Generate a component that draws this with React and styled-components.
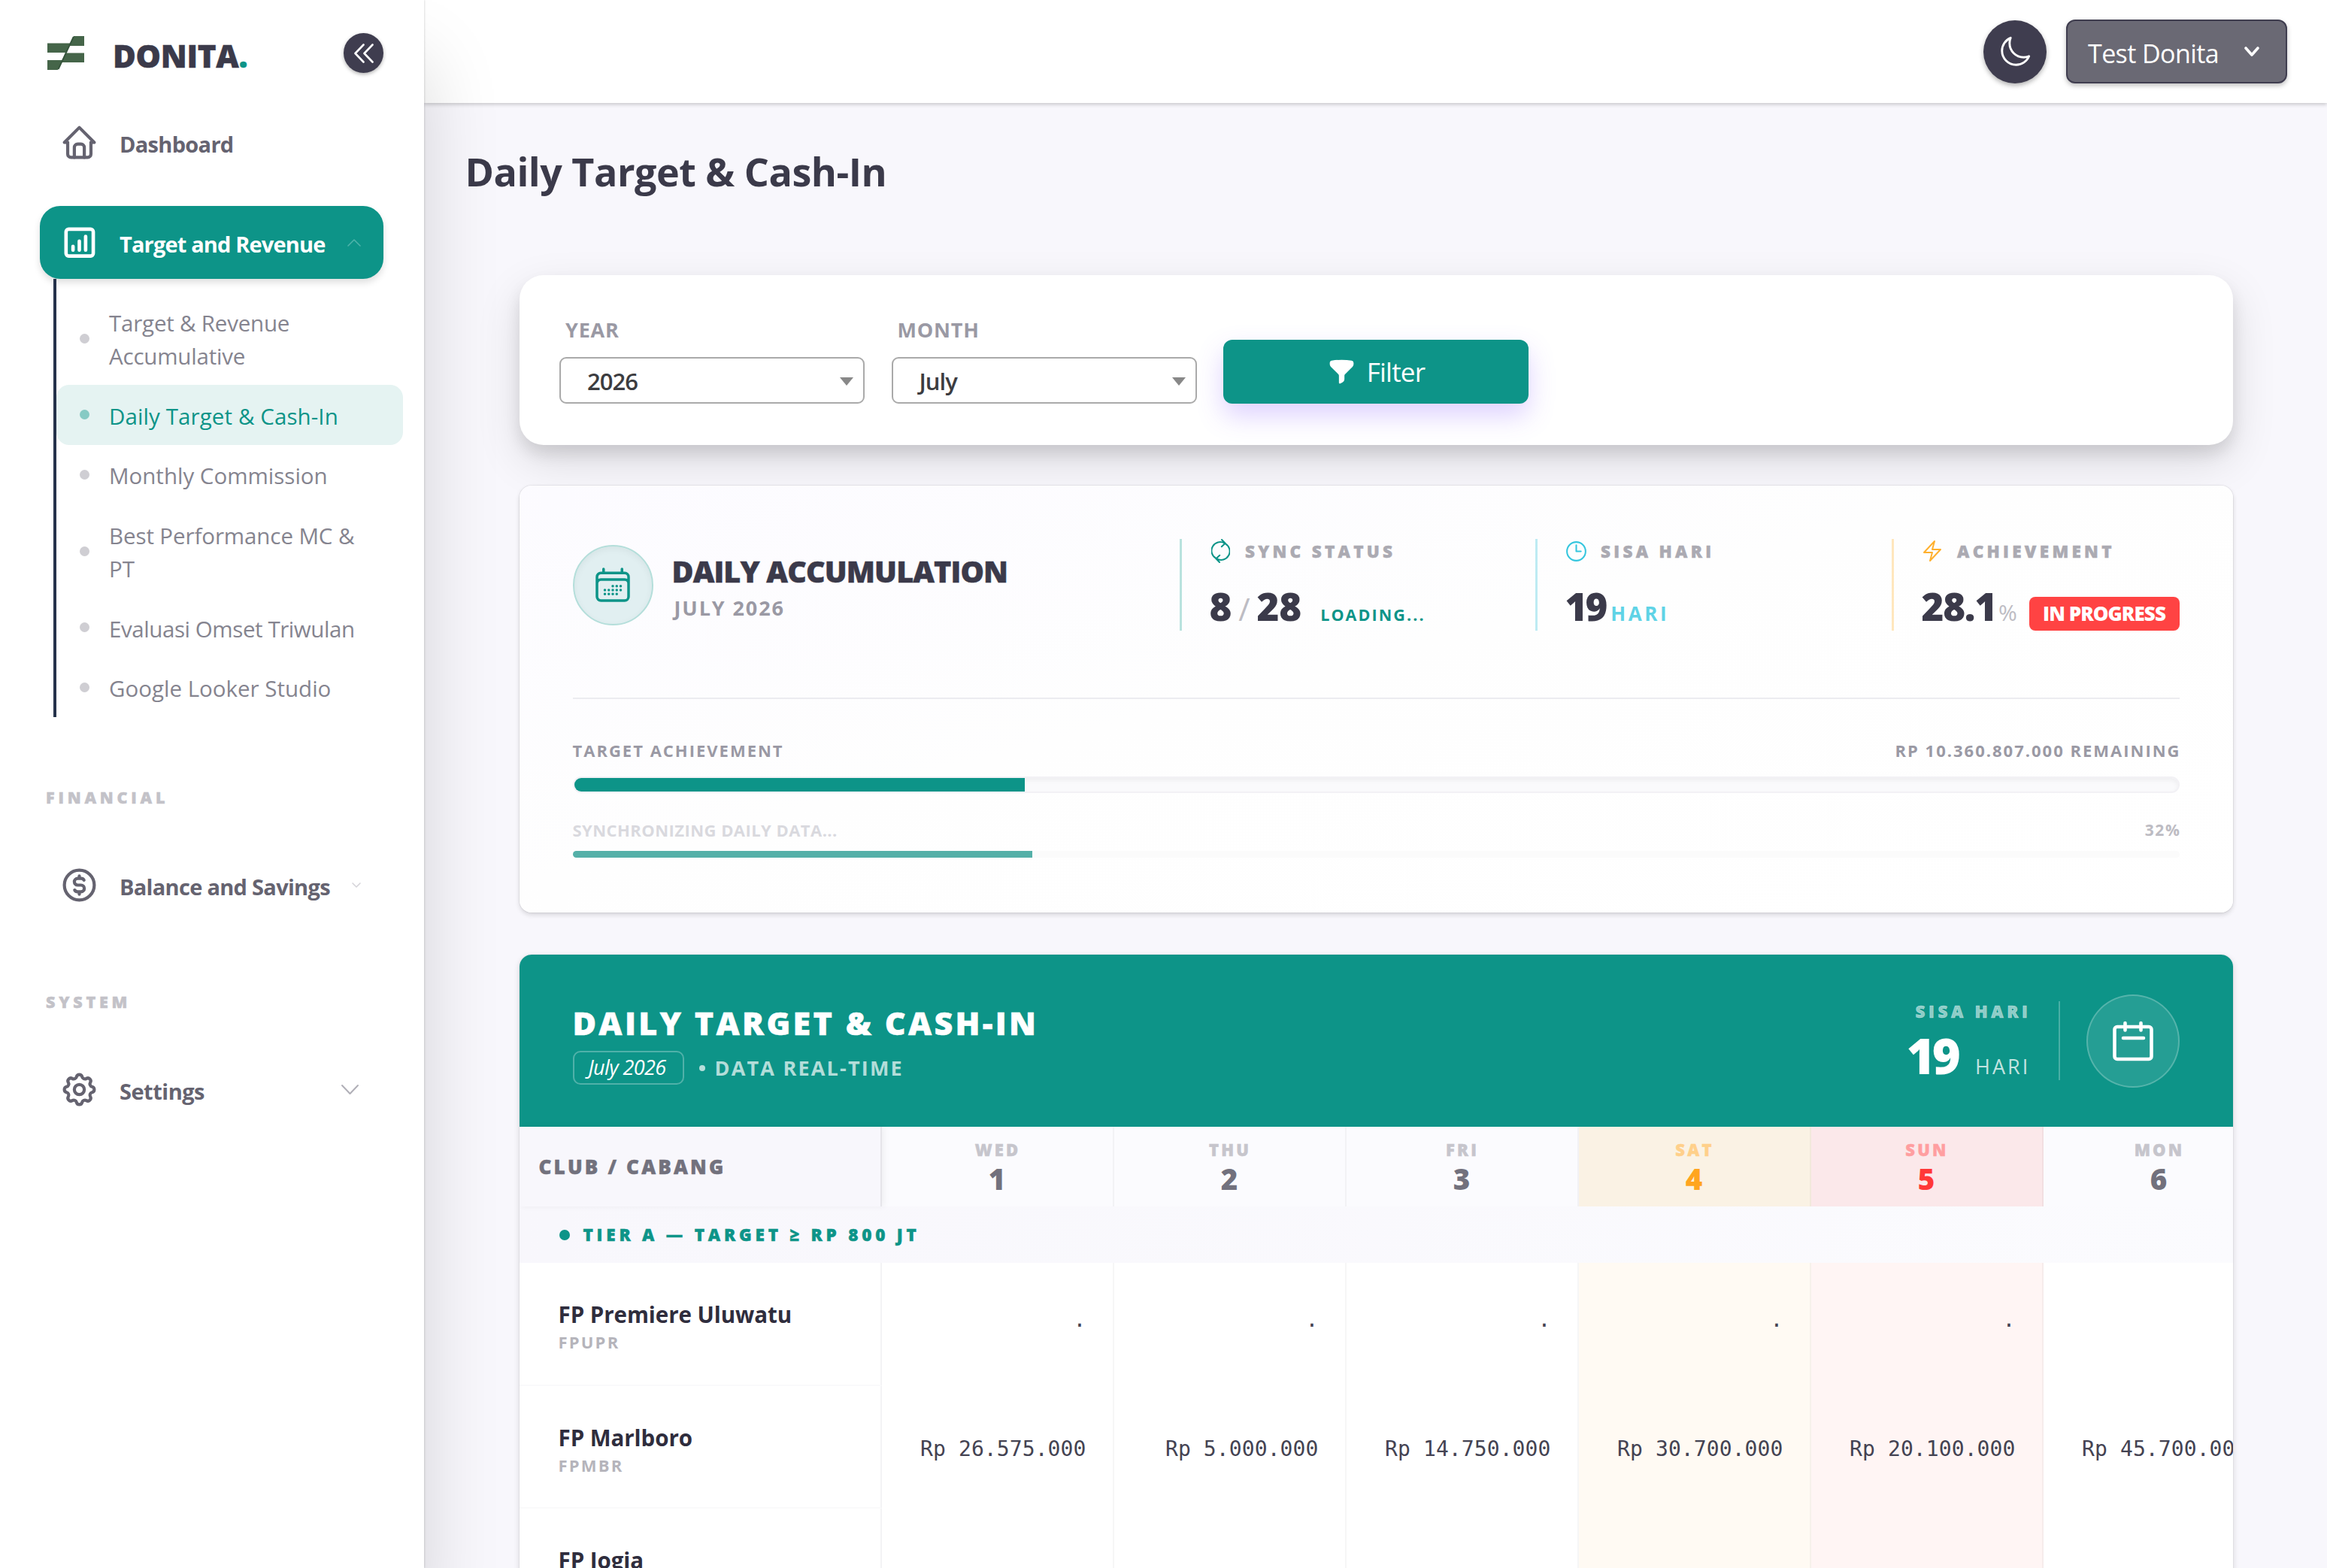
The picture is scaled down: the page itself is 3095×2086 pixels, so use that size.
import React, { useState } from 'react';
import styled, { createGlobalStyle, css } from 'styled-components';
import { HiFunnel, HiOutlineBolt, HiOutlineCalendarDays, HiOutlineClock, HiOutlineMoon } from 'react-icons/hi2';

const GlobalStyle = createGlobalStyle`
  * { box-sizing: border-box; }
  body {
    margin: 0;
    background: #f8f7fc;
    font-family: 'Open Sans', 'Noto Sans', sans-serif;
    color: #3b3a4a;
  }
`

// extra weight for the "black" captions
const heavy = css`
  font-weight: 800;
  -webkit-text-stroke: 0.5px currentColor;
`

/* ---------- layout ---------- */

const Layout = styled.div`
  display: flex;
  height: 2086px;
  overflow: hidden;
`

const Sidebar = styled.aside`
  position: relative;
  z-index: 2;
  flex: none;
  width: 564px;
  background: #fff;
  box-shadow: 1px 0 2px rgba(0, 0, 0, 0.12), 0 80px 95px rgba(0, 0, 0, 0.15);
`

const Main = styled.main`
  flex: 1;
  min-width: 0;
  display: flex;
  flex-direction: column;
`

const Topbar = styled.header`
  position: relative;
  z-index: 1;
  flex: none;
  display: flex;
  align-items: center;
  justify-content: flex-end;
  gap: 26px;
  height: 137px;
  padding: 0 53px;
  background: #fff;
  box-shadow: 0 2px 5px rgba(0, 0, 0, 0.2);
`

const Content = styled.div`
  padding: 56px 125.5px 0 126.5px;
`

/* ---------- sidebar ---------- */

const Brand = styled.div`
  display: flex;
  align-items: center;
  height: 141px;
  padding: 0 54px 0 63px;
`

const BrandName = styled.div`
  flex: 1;
  padding: 6px 0 0 38px;
  font-size: 42px;
  ${heavy}
  line-height: 60px;
  letter-spacing: -0.3px;
  color: #3b3a4a;

  span { color: #0d9488; }
`

const Collapse = styled.button`
  display: flex;
  align-items: center;
  justify-content: center;
  width: 53px;
  height: 53px;
  padding: 0;
  border: none;
  border-radius: 50%;
  background: #3f3d4f;
  box-shadow: 0 2px 5px rgba(0, 0, 0, 0.3);
`

const MenuItem = styled.a`
  display: flex;
  align-items: center;
  width: 457px;
  height: 97px;
  margin-left: 53px;
  margin-top: ${props => props.$top || 0}px;
  padding: 0 ${props => props.$right || 29}px 0 26px;
  border-radius: 27px;
  color: #656370;
  ${props => props.$active && css`
    background: #0d9488;
    color: #fff;
    box-shadow: 0 5px 10px rgba(0, 0, 0, 0.13);
  `}
`

const MenuLabel = styled.span`
  flex: 1;
  padding-top: 4px;
  margin-left: 27px;
  font-size: 29px;
  font-weight: 700;
  line-height: 44px;
  letter-spacing: ${props => props.$ls || -0.7}px;
  white-space: nowrap;
`

const MenuTitle = styled.div`
  margin-top: 92px;
  padding-left: 61px;
  font-size: 21.5px;
  ${heavy}
  line-height: 30px;
  letter-spacing: 4.8px;
  color: #c3c2c8;
`

const SubMenu = styled.div`
  width: 465px;
  margin-left: 71px;
  padding-top: 17px;
  border-left: 4px solid #25324b;
`

const SubItem = styled.a`
  display: flex;
  align-items: center;
  min-height: 79.5px;
  height: ${props => props.$tall ? 124 : 79.5}px;
  padding: 0 40px 0 31px;
  border-radius: 17px;
  font-size: 29.5px;
  line-height: 44px;
  color: ${props => props.$active ? '#0d9488' : '#85848f'};
  background: ${props => props.$active ? '#e5f3f2' : 'transparent'};
`

const SubDot = styled.i`
  flex: none;
  width: 13px;
  height: 13px;
  margin-right: 26px;
  border-radius: 50%;
  background: ${props => props.$active ? '#86cac4' : '#cfced3'};
`

const SubText = styled.span`
  padding-top: 4px;
  letter-spacing: ${props => props.$ls || 0}px;
`

/* ---------- topbar ---------- */

const ThemeButton = styled.button`
  display: flex;
  align-items: center;
  justify-content: center;
  width: 84px;
  height: 84px;
  padding: 0;
  border: none;
  border-radius: 50%;
  color: #fff;
  background: #3f3d4f;
  box-shadow: 0 3px 6px rgba(0, 0, 0, 0.3);
`

const UserButton = styled.button`
  display: flex;
  align-items: center;
  justify-content: space-between;
  width: 294px;
  height: 85px;
  padding: 0 35px 0 27px;
  border: 2px solid #3f3d4f;
  border-radius: 12px;
  font: 400 34px/48px 'Open Sans', sans-serif;
  letter-spacing: -0.6px;
  color: #fff;
  background: #6a6974;
  box-shadow: 0 3px 6px rgba(0, 0, 0, 0.25);

  span { padding-top: 5px; }
`

/* ---------- filter ---------- */

const PageTitle = styled.h1`
  margin: 0 0 103px -72px;
  font-size: 52px;
  font-weight: 700;
  line-height: 70px;
  letter-spacing: -0.48px;
  color: #3b3a4a;
`

const FilterCard = styled.section`
  display: flex;
  align-items: flex-end;
  gap: 35.5px;
  height: 226px;
  padding: 0 53.5px 55px;
  border-radius: 32px;
  background: #fff;
  box-shadow: 0 12px 20px rgba(0, 0, 0, 0.1), 0 22px 60px rgba(0, 0, 0, 0.12);
`

const Field = styled.label`
  width: 406px;
`

const FieldLabel = styled.div`
  margin-bottom: 18px;
  padding-left: 8px;
  font-size: 27px;
  font-weight: 700;
  line-height: 37px;
  letter-spacing: 0.8px;
  color: #9a99a4;
`

const SelectBox = styled.div`
  display: flex;
  align-items: center;
  justify-content: space-between;
  height: 62px;
  padding: 2px 13px 0 35px;
  border: 2px solid #aaa;
  border-radius: 9px;
  font-size: 31px;
  font-weight: 600;
  line-height: 44px;
  letter-spacing: -1px;
  color: #3c3c40;

  i {
    border: 9px solid transparent;
    border-top: 11px solid #888;
    border-bottom: none;
  }
`

const FilterButton = styled.button`
  display: flex;
  align-items: center;
  justify-content: center;
  gap: 14px;
  width: 406px;
  height: 85px;
  padding: 0;
  border: none;
  border-radius: 12px;
  font: 400 35px/48px 'Open Sans', sans-serif;
  letter-spacing: -0.8px;
  color: #fff;
  background: #0d9488;
  box-shadow: 0 16px 34px rgba(124, 77, 255, 0.25);
`

/* ---------- accumulation card ---------- */

const SummaryCard = styled.section`
  height: 568px;
  margin-top: 54px;
  padding: 71px;
  border-radius: 16px;
  background: linear-gradient(165deg, #fcfbff 0%, #fefefe 45%, #fff 100%);
  box-shadow: 0 0 0 1px rgba(0, 0, 0, 0.05), 0 3px 6px rgba(0, 0, 0, 0.14);
`

const SummaryHead = styled.div`
  display: flex;
  align-items: center;
  height: 122px;
`

const RoundIcon = styled.div`
  display: flex;
  align-items: center;
  justify-content: center;
  width: 107px;
  height: 107px;
  border: 2px solid #b4deda;
  border-radius: 50%;
  color: #0d9488;
  background: #e1eff1;
  box-shadow: inset 0 3px 10px rgba(0, 0, 0, 0.05);
`

const SummaryTitle = styled.h2`
  margin: 12px 0 0;
  padding-left: 25px;
  font-size: 39.5px;
  ${heavy}
  line-height: 50px;
  letter-spacing: -0.85px;
  color: #3b3a4a;

  small {
    display: block;
    padding-left: 3px;
    font-size: 27px;
    font-weight: 700;
    line-height: 48px;
    letter-spacing: 1.9px;
    -webkit-text-stroke: 0;
    color: #9a99a4;
  }
`

const Stats = styled.div`
  display: grid;
  grid-template-columns: 473px 474px 383px;
  margin-left: auto;
`

const Stat = styled.div`
  height: 122px;
  padding-left: 37px;
  border-left: 3px solid ${props => props.$color};
`

const StatLabel = styled.div`
  display: flex;
  align-items: center;
  height: 32px;
  font-size: 22.5px;
  ${heavy}
  letter-spacing: 4.3px;
  white-space: nowrap;
  color: #abaab2;
`

const StatIcon = styled.span`
  display: flex;
  align-items: center;
  justify-content: center;
  width: 34px;
  margin: 0 16px 0 -2.5px;
  color: ${props => props.$color};
`

const StatValue = styled.div`
  display: flex;
  align-items: baseline;
  margin-top: 24px;
  font-size: 51px;
  font-weight: 800;
  line-height: 66px;
  letter-spacing: ${props => props.$ls || 0}px;
  color: #3b3a4a;
`

const Slash = styled.span`
  width: 33px;
  text-align: center;
  font-size: 42px;
  font-weight: 400;
  color: #bdbcc3;
`

const Loading = styled.span`
  margin-left: 25px;
  font-size: 21.5px;
  font-weight: 700;
  letter-spacing: 2.1px;
  color: #0d9488;
`

const Hari = styled.span`
  margin-left: 7px;
  font-size: 26px;
  font-weight: 700;
  letter-spacing: 3.6px;
  color: #5fd3e6;
`

const Percent = styled.span`
  margin-left: 3px;
  font-size: 30px;
  font-weight: 400;
  letter-spacing: 0;
  color: #bdbcc3;
`

const Badge = styled.span`
  width: 200px;
  height: 45px;
  margin-left: auto;
  border-radius: 8px;
  text-align: center;
  font-size: 26px;
  line-height: 45px;
  letter-spacing: -0.95px;
  color: #fff;
  background: #ff4343;
`

const Divider = styled.hr`
  height: 2px;
  margin: 89px 0 53px;
  border: none;
  background: #ececf0;
`

const BarCaption = styled.div`
  display: flex;
  justify-content: space-between;
  margin-top: ${props => props.$top || 0}px;
  margin-right: -2px;
  font-size: 22px;
  font-weight: 700;
  line-height: 30px;
  letter-spacing: ${props => props.$ls}px;
  color: ${props => props.$color};
`

const BarPercent = styled.span`
  font-size: 21px;
  letter-spacing: 1.6px;
  color: #bdbcc3;
`

const Track = styled.div`
  height: 22px;
  margin-top: 20px;
  border: 2px solid #f2f1f5;
  border-radius: 11px;
  background: #fafafc;
  box-shadow: inset 0 3px 6px rgba(0, 0, 0, 0.05);
  overflow: hidden;

  div {
    height: 18px;
    background: #0d9488;
  }
`

const ThinTrack = styled.div`
  height: 9px;
  margin-top: 13px;
  border-radius: 5px;
  background: #fbfbfb;
  overflow: hidden;

  div {
    height: 9px;
    background: #54b0a8;
  }
`

/* ---------- table card ---------- */

const TableCard = styled.section`
  margin-top: 56px;
  border-radius: 16px;
  background: #fff;
  box-shadow: 0 0 0 1px rgba(0, 0, 0, 0.03), 0 3px 8px rgba(0, 0, 0, 0.14);
  overflow: hidden;
`

const TableHead = styled.div`
  display: flex;
  align-items: center;
  height: 229px;
  padding: 0 71px;
  color: #fff;
  background: #0d9488;
`

const TableTitle = styled.h2`
  margin: 0;
  font-size: 43px;
  ${heavy}
  line-height: 60px;
  letter-spacing: 3.3px;
`

const HeadLeft = styled.div`
  flex: 1;
  padding-top: 5px;
`

const SubLine = styled.div`
  display: flex;
  align-items: center;
  margin-top: 7px;
  font-size: 27px;
  font-weight: 700;
  line-height: 40px;
  letter-spacing: 2.2px;
  color: rgba(255, 255, 255, 0.7);

  i {
    width: 8px;
    height: 8px;
    margin: 0 13px 0 20px;
    border-radius: 50%;
    background: rgba(255, 255, 255, 0.7);
  }
`

const Period = styled.em`
  width: 148px;
  height: 45px;
  padding-right: 3px;
  border: 2px solid rgba(255, 255, 255, 0.28);
  border-radius: 10px;
  text-align: center;
  font-weight: 400;
  letter-spacing: -0.6px;
  color: #fff;
`

const DaysLeft = styled.div`
  padding: 5px 40px 0 0;
`

const DaysLabel = styled.div`
  margin-right: -4px;
  text-align: right;
  font-size: 22.5px;
  ${heavy}
  line-height: 30px;
  letter-spacing: 4.6px;
  color: rgba(255, 255, 255, 0.55);
`

const DaysValue = styled.div`
  display: flex;
  align-items: baseline;
  justify-content: flex-end;
  height: 80px;
  margin: 3px -3px 0 0;
  font-size: 65px;
  font-weight: 800;
  line-height: 80px;
  letter-spacing: -4px;

  span {
    margin-left: 23px;
    font-size: 27px;
    font-weight: 400;
    line-height: 40px;
    letter-spacing: 3.1px;
    color: rgba(255, 255, 255, 0.75);
  }
`

const HeadRule = styled.div`
  width: 2px;
  height: 105px;
  margin-right: 35px;
  background: rgba(255, 255, 255, 0.25);
`

const HeadIcon = styled.div`
  display: flex;
  align-items: center;
  justify-content: center;
  width: 124px;
  height: 124px;
  border: 2px solid rgba(255, 255, 255, 0.22);
  border-radius: 50%;
  background: rgba(255, 255, 255, 0.1);
`

const tone = {
    sat: { head: '#faf2e4', body: '#fffaf3', day: '#ffd08a', num: '#ffa51f' },
    sun: { head: '#fbe8ea', body: '#fff5f4', day: '#ff9ea0', num: '#ff3838' },
    plain: { head: '#fbfbfe', body: '#fff', day: '#c6c5cc', num: '#72717d' }
}

const Row = styled.div`
  display: flex;
  width: max-content;
  height: ${props => props.$height}px;
`

const ClubHeadCell = styled.div`
  position: relative;
  width: 482px;
  padding-left: 26px;
  border-right: 2px solid #e6e5ea;
  font-size: 26px;
  ${heavy}
  line-height: 107px;
  letter-spacing: 3.2px;
  color: #72717d;
  background: #f8f7fc;
  box-shadow: 3px 0 8px rgba(0, 0, 0, 0.05);
`

const DayHeadCell = styled.div`
  width: 309px;
  padding-top: 16px;
  border-right: 2px solid rgba(0, 0, 0, 0.035);
  text-align: center;
  background: ${props => tone[props.$tone].head};

  small {
    display: block;
    padding-left: 2px;
    font-size: 22px;
    ${heavy}
    line-height: 28px;
    letter-spacing: 3.2px;
    color: ${props => tone[props.$tone].day};
  }

  b {
    display: block;
    font-size: 38.5px;
    font-weight: 800;
    line-height: 50px;
    color: ${props => tone[props.$tone].num};
  }
`

const TierRow = styled.div`
  display: flex;
  align-items: center;
  height: 75px;
  padding-left: 53px;
  font-size: 22.5px;
  ${heavy}
  letter-spacing: 4.8px;
  color: #0d9488;
  background: linear-gradient(90deg, #f8f7fc, #fbfbfe);

  i {
    width: 14px;
    height: 14px;
    margin-right: 18px;
    border-radius: 50%;
    background: #0d9488;
  }
`

const ClubCell = styled.div`
  width: 482px;
  padding: 50px 0 0 52px;
  border-right: 2px solid #f3f3f5;
  border-bottom: 2px solid #fafafb;
  font-size: 29.5px;
  font-weight: 700;
  line-height: 37px;
  letter-spacing: -0.05px;
  color: #2f2d3d;

  small {
    display: block;
    font-size: 22px;
    line-height: 36px;
    letter-spacing: 2.2px;
    color: #b5b4bb;
  }
`

const ValueCell = styled.div`
  width: 309px;
  padding: 2px 35px 0 0;
  border-right: 2px solid rgba(0, 0, 0, 0.035);
  text-align: right;
  font-family: 'DejaVu Sans Mono', monospace;
  font-size: 28px;
  line-height: 163px;
  letter-spacing: 0.1px;
  white-space: nowrap;
  color: #444352;
  background: ${props => tone[props.$tone].body};
`

/* ---------- icons ---------- */

const Svg = ({ size = 53, stroke = 2, children }) => (
    <svg width={size} height={size} viewBox="0 0 24 24" fill="none" stroke="currentColor"
        strokeWidth={stroke} strokeLinecap="round" strokeLinejoin="round">
        {children}
    </svg>
)

const HomeIcon = () => (
    <Svg stroke={1.9}>
        <path d="M5 12H3l9-9 9 9h-2" />
        <path d="M5 12v7a2 2 0 0 0 2 2h10a2 2 0 0 0 2-2v-7" />
        <path d="M9 21v-6a2 2 0 0 1 2-2h2a2 2 0 0 1 2 2v6" />
    </Svg>
)

const ChartIcon = () => (
    <Svg stroke={2.1}>
        <rect x="4" y="4" width="16.4" height="16.2" rx="1.6" />
        <path d="M8.2 16.6v-2.2M12 16.6v-5.4M15.8 16.6V8.4" />
    </Svg>
)

const CoinIcon = () => (
    <Svg stroke={1.9}>
        <circle cx="12" cy="12" r="9" />
        <path d="M14.8 9A2 2 0 0 0 13 8h-2a2 2 0 1 0 0 4h2a2 2 0 1 1 0 4h-2a2 2 0 0 1-1.8-1M12 6.5V8m0 8v1.5" />
    </Svg>
)

const GearIcon = () => (
    <Svg stroke={1.9}>
        <path d="M10.325 4.317c.426-1.756 2.924-1.756 3.35 0a1.724 1.724 0 0 0 2.573 1.066c1.543-.94 3.31.826 2.37 2.37a1.724 1.724 0 0 0 1.065 2.572c1.756.426 1.756 2.924 0 3.35a1.724 1.724 0 0 0-1.066 2.573c.94 1.543-.826 3.31-2.37 2.37a1.724 1.724 0 0 0-2.572 1.065c-.426 1.756-2.924 1.756-3.35 0a1.724 1.724 0 0 0-2.573-1.066c-1.543.94-3.31-.826-2.37-2.37a1.724 1.724 0 0 0-1.065-2.572c-1.756-.426-1.756-2.924 0-3.35a1.724 1.724 0 0 0 1.066-2.573c-.94-1.543.826-3.31 2.37-2.37 1 .608 2.296.07 2.572-1.065z" />
        <circle cx="12" cy="12" r="3" />
    </Svg>
)

const SyncIcon = () => (
    <svg width="25" height="32" viewBox="0 0 25 32" fill="none" stroke="currentColor"
        strokeWidth="2" strokeLinecap="round" strokeLinejoin="round">
        <path d="M6.2 25.6A11.5 11.5 0 0 1 17.6 5.6M14 1l4.6 4.8-4.8 4.4" />
        <path d="M18.8 6.4A11.5 11.5 0 0 1 7.4 26.4M11 31l-4.6-4.8 4.8-4.4" />
    </svg>
)

const CalendarIcon = () => (
    <svg width="54" height="54" viewBox="0 0 54 54" fill="none" stroke="currentColor"
        strokeWidth="4.6" strokeLinecap="round" strokeLinejoin="round">
        <rect x="2.5" y="8" width="49" height="43" rx="3.5" />
        <path d="M16.5 3v9.5M37.5 3v9.5M14 23h27" />
    </svg>
)

const Chevron = ({ width, height, stroke = 2, color = 'currentColor', up }) => (
    <svg width={width} height={height} viewBox={`0 0 ${width} ${height}`} fill="none" stroke={color}
        strokeWidth={stroke} strokeLinecap="round" strokeLinejoin="round">
        {up
            ? <path d={`M2 ${height - 2}L${width / 2} 2L${width - 2} ${height - 2}`} />
            : <path d={`M2 2L${width / 2} ${height - 2}L${width - 2} 2`} />}
    </svg>
)

const Logo = () => (
    <svg width="49" height="45" viewBox="0 0 49 45" fill="#456549">
        <path d="M35 0h14v13H29z" />
        <path d="M0 9.5h31L25 22H0z" />
        <path d="M24 22.5h25V35H18.5z" />
        <path d="M0 32h20l-6 13H0z" />
        <path d="M34.8 1L14.6 44" stroke="#34533a" strokeWidth="1.8" />
    </svg>
)

/* ---------- data ---------- */

const subItems = [
    { label: 'Target & Revenue Accumulative', ls: -0.2, tall: true },
    { label: 'Daily Target & Cash-In', ls: 0.1 },
    { label: 'Monthly Commission' },
    { label: 'Best Performance MC & PT', ls: -0.1, tall: true },
    { label: 'Evaluasi Omset Triwulan', ls: -0.42 },
    { label: 'Google Looker Studio' }
]

const days = [
    { day: 'WED', num: 1, tone: 'plain' },
    { day: 'THU', num: 2, tone: 'plain' },
    { day: 'FRI', num: 3, tone: 'plain' },
    { day: 'SAT', num: 4, tone: 'sat' },
    { day: 'SUN', num: 5, tone: 'sun' },
    { day: 'MON', num: 6, tone: 'plain' }
]

const clubs = [
    { name: 'FP Premiere Uluwatu', code: 'FPUPR', values: ['·', '·', '·', '·', '·', ''] },
    {
        name: 'FP Marlboro',
        code: 'FPMBR',
        values: ['Rp 26.575.000', 'Rp 5.000.000', 'Rp 14.750.000', 'Rp 30.700.000', 'Rp 20.100.000', 'Rp 45.700.000']
    },
    { name: 'FP Jogja', code: '', values: ['', '', '', '', '', ''] }
]

function App() {
    const [active, setActive] = useState('Daily Target & Cash-In')

    return (
        <Layout>
            <GlobalStyle />
            <Sidebar>
                <Brand>
                    <Logo />
                    <BrandName>DONITA<span>.</span></BrandName>
                    <Collapse>
                        <svg width="26" height="26" viewBox="0 0 26 26" fill="none" stroke="#fff"
                            strokeWidth="2.6" strokeLinecap="round" strokeLinejoin="round">
                            <path d="M12.5 1.5L1.5 13l11 11.5M24.5 1.5L13.5 13l11 11.5" />
                        </svg>
                    </Collapse>
                </Brand>
                <MenuItem>
                    <HomeIcon />
                    <MenuLabel>Dashboard</MenuLabel>
                </MenuItem>
                <MenuItem $active $top={36}>
                    <ChartIcon />
                    <MenuLabel $ls={-0.85}>Target and Revenue</MenuLabel>
                    <Chevron up width={20} height={12} stroke={1.6} color="#4fb3aa" />
                </MenuItem>
                <SubMenu>
                    {subItems.map((item) => {
                        const on = item.label === active
                        return (
                            <SubItem key={item.label} $active={on} $tall={item.tall} onClick={() => setActive(item.label)}>
                                <SubDot $active={on} />
                                <SubText $ls={item.ls}>{item.label}</SubText>
                            </SubItem>
                        )
                    })}
                </SubMenu>
                <MenuTitle>FINANCIAL</MenuTitle>
                <MenuItem $top={53}>
                    <CoinIcon />
                    <MenuLabel>Balance and Savings</MenuLabel>
                    <Chevron width={14} height={9} stroke={1.6} color="#d5d4d9" />
                </MenuItem>
                <MenuTitle>SYSTEM</MenuTitle>
                <MenuItem $top={53} $right={32}>
                    <GearIcon />
                    <MenuLabel $ls={-0.5}>Settings</MenuLabel>
                    <Chevron width={25} height={15} color="#b0afb7" />
                </MenuItem>
            </Sidebar>

            <Main>
                <Topbar>
                    <ThemeButton>
                        <HiOutlineMoon size={46} />
                    </ThemeButton>
                    <UserButton>
                        <span>Test Donita</span>
                        <Chevron width={20} height={13} stroke={3.6} />
                    </UserButton>
                </Topbar>

                <Content>
                    <PageTitle>Daily Target &amp; Cash-In</PageTitle>

                    <FilterCard>
                        <Field>
                            <FieldLabel>YEAR</FieldLabel>
                            <SelectBox>2026<i /></SelectBox>
                        </Field>
                        <Field>
                            <FieldLabel>MONTH</FieldLabel>
                            <SelectBox>July<i /></SelectBox>
                        </Field>
                        <FilterButton>
                            <HiFunnel size={39} />
                            Filter
                        </FilterButton>
                    </FilterCard>

                    <SummaryCard>
                        <SummaryHead>
                            <RoundIcon><HiOutlineCalendarDays size={56} /></RoundIcon>
                            <SummaryTitle>
                                DAILY ACCUMULATION
                                <small>JULY 2026</small>
                            </SummaryTitle>
                            <Stats>
                                <Stat $color="#b9e2de">
                                    <StatLabel>
                                        <StatIcon $color="#0d9488"><SyncIcon /></StatIcon>
                                        SYNC STATUS
                                    </StatLabel>
                                    <StatValue>
                                        8<Slash>/</Slash>28
                                        <Loading>LOADING...</Loading>
                                    </StatValue>
                                </Stat>
                                <Stat $color="#bdebf3">
                                    <StatLabel>
                                        <StatIcon $color="#35c6de"><HiOutlineClock size={33} /></StatIcon>
                                        SISA HARI
                                    </StatLabel>
                                    <StatValue $ls={-3}>
                                        19<Hari>HARI</Hari>
                                    </StatValue>
                                </Stat>
                                <Stat $color="#ffe7bd">
                                    <StatLabel>
                                        <StatIcon $color="#ffb02e"><HiOutlineBolt size={32} /></StatIcon>
                                        ACHIEVEMENT
                                    </StatLabel>
                                    <StatValue $ls={-1.2}>
                                        28.1<Percent>%</Percent>
                                        <Badge>IN PROGRESS</Badge>
                                    </StatValue>
                                </Stat>
                            </Stats>
                        </SummaryHead>
                        <Divider />
                        <BarCaption $ls={2} $color="#9a99a4">
                            <span>TARGET ACHIEVEMENT</span>
                            <span>RP 10.360.807.000 REMAINING</span>
                        </BarCaption>
                        <Track><div style={{ width: '28.1%' }} /></Track>
                        <BarCaption $top={34} $ls={0.45} $color="#d9d9de">
                            <span>SYNCHRONIZING DAILY DATA...</span>
                            <BarPercent>32%</BarPercent>
                        </BarCaption>
                        <ThinTrack><div style={{ width: '28.6%' }} /></ThinTrack>
                    </SummaryCard>

                    <TableCard>
                        <TableHead>
                            <HeadLeft>
                                <TableTitle>DAILY TARGET &amp; CASH-IN</TableTitle>
                                <SubLine>
                                    <Period>July 2026</Period>
                                    <i />
                                    DATA REAL-TIME
                                </SubLine>
                            </HeadLeft>
                            <DaysLeft>
                                <DaysLabel>SISA HARI</DaysLabel>
                                <DaysValue>19<span>HARI</span></DaysValue>
                            </DaysLeft>
                            <HeadRule />
                            <HeadIcon><CalendarIcon /></HeadIcon>
                        </TableHead>
                        <Row $height={106}>
                            <ClubHeadCell>CLUB / CABANG</ClubHeadCell>
                            {days.map((d) => (
                                <DayHeadCell key={d.num} $tone={d.tone}>
                                    <small>{d.day}</small>
                                    <b>{d.num}</b>
                                </DayHeadCell>
                            ))}
                        </Row>
                        <TierRow><i />TIER A — TARGET ≥ RP 800 JT</TierRow>
                        {clubs.map((club) => (
                            <Row key={club.name} $height={163.5}>
                                <ClubCell>
                                    {club.name}
                                    <small>{club.code}</small>
                                </ClubCell>
                                {club.values.map((value, key) => (
                                    <ValueCell key={key} $tone={days[key].tone}>{value}</ValueCell>
                                ))}
                            </Row>
                        ))}
                    </TableCard>
                </Content>
            </Main>
        </Layout>
    )
}

export default App;
